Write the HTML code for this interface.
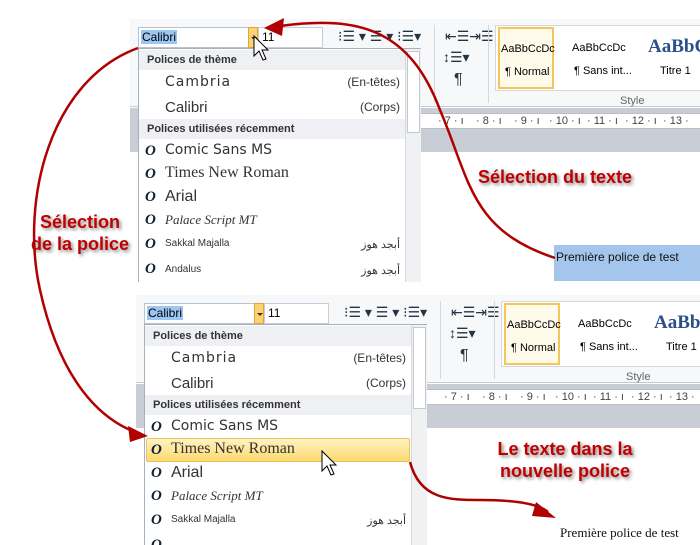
<!DOCTYPE html>
<html><head><meta charset="utf-8"><style>
*{margin:0;padding:0;box-sizing:border-box}
html,body{width:700px;height:545px;overflow:hidden}
body{background:#fff;position:relative;font-family:"Liberation Sans","Noto Sans CJK SC",sans-serif}
.p{position:absolute;overflow:hidden}
.p div,.p span{position:absolute;white-space:nowrap}
.rib{left:-20px;top:-8px;width:700px;height:88px;background:#f7f8fa;border-bottom:1px solid #c6cbd3}
.band{left:-20px;top:81px;width:700px;height:44px;background:#c9ced6}
.ruler{left:262px;top:86px;width:400px;height:16px;background:#fff;border-top:1px solid #b8bec8;border-bottom:1px solid #b8bec8;font-size:11px;color:#444;line-height:14px}
.fb{left:0;top:0;width:112px;height:21px;background:#fff;border:1px solid #b9c2cf;font-size:12px;line-height:19px;padding-left:2px}
.sel{position:static!important;background:#9cc6f3;padding:0 1px}
.dd{left:110px;top:0;width:10px;height:21px;background:#fcd36f;border:1px solid #e1a33b}
.dd:after{content:"";position:absolute;left:2px;top:9px;border:3px solid transparent;border-top:3px solid #333}
.sz{left:120px;top:0;width:65px;height:21px;background:#fff;border:1px solid #c8ced8;font-size:12px;line-height:19px;padding-left:3px}
.ic{font-size:14px;color:#234}
.gal{left:357px;top:-2px;width:220px;height:66px;background:#fff;border:1px solid #d3d8e0}
.st{top:0;width:72px;height:62px;font-size:11px;text-align:center}
.menu{left:0;top:21px;width:283px;height:300px;background:#fff;border:1px solid #a7b0bd}
.hd{left:0;width:266px;height:20px;background:#eef0f4;font-size:11px;font-weight:bold;color:#333;line-height:20px;padding-left:8px}
.it{left:26px;font-size:15px;color:#333}
.rt{right:20px;font-size:12px;color:#333}
.o{left:6px;font:italic bold 15px "Liberation Serif",serif;color:#123}
.sb{left:266px;top:0;width:16px;height:300px;background:#f0f1f3;border-left:1px solid #d5d9df}
.red{color:#c00000;font-weight:bold;font-size:18px;text-shadow:2px 2px 3px #888}
.n{top:0}
</style></head><body>

<div class="p" style="left:130px;top:0;width:570px;height:282px">
<div style="left:8px;top:27px;width:570px;height:300px">
 <div class="rib"></div>
 <div class="band"></div>
 <div class="ruler"><span class="n" style="left:38px">· 7 ·  ı</span><span class="n" style="left:76px">· 8 ·  ı</span><span class="n" style="left:114px">· 9 ·  ı</span><span class="n" style="left:149px">· 10 ·  ı</span><span class="n" style="left:187px">· 11 ·  ı</span><span class="n" style="left:225px">· 12 ·  ı</span><span class="n" style="left:263px">· 13 ·</span></div>
 <div style="left:-20px;top:125px;width:700px;height:200px;background:#fff"></div>
 <div class="fb"><span class="sel">Calibri</span></div><div class="dd"></div>
 <div class="sz">11</div>
 <div class="ic" style="left:200px;top:1px">⁝☰ ▾ ☰ ▾ ⁝☰▾</div>
 <div class="ic" style="left:307px;top:1px">⇤☰⇥☰</div>
 <div class="ic" style="left:305px;top:22px">↕☰▾</div>
 <div style="left:316px;top:44px;font-size:16px;color:#333">¶</div>
 <div style="left:296px;top:-2px;width:1px;height:78px;background:#d5d9df"></div>
 <div style="left:350px;top:-2px;width:1px;height:78px;background:#d5d9df"></div>
 <div class="gal">
  <div class="st" style="left:2px;top:1px;width:56px;border:2px solid #f3c55a;background:#fffbea"><span style="left:1px;top:14px">AaBbCcDc</span><span style="left:5px;top:37px">¶ Normal</span></div>
  <div class="st" style="left:74px"><span style="left:2px;top:16px">AaBbCcDc</span><span style="left:4px;top:39px">¶ Sans int...</span></div>
  <div class="st" style="left:150px"><span style="left:2px;top:10px;font:bold 19px 'Liberation Serif',serif;color:#2a4f8a">AaBbC</span><span style="left:14px;top:39px">Titre 1</span></div>
 </div>
 <div style="left:482px;top:68px;font-size:11px;color:#666">Style</div>
 <div class="menu">
  <div class="hd" style="top:1px">Polices de thème</div>
  <div class="it" style="top:25px;font-family:'DejaVu Sans';font-size:14px;letter-spacing:1px">Cambria</div><div class="rt" style="top:26px">(En-têtes)</div>
  <div class="it" style="top:50px">Calibri</div><div class="rt" style="top:51px">(Corps)</div>
  <div class="hd" style="top:70px">Polices utilisées récemment</div>
  <div class="o" style="top:94px">O</div><div class="it" style="top:93px;font-family:'DejaVu Sans';font-size:14px">Comic Sans MS</div>
  <div class="o" style="top:117px">O</div><div class="it" style="top:115px;font:16px 'Liberation Serif',serif">Times New Roman</div>
  <div class="o" style="top:140px">O</div><div class="it" style="top:139px;font-size:16px">Arial</div>
  <div class="o" style="top:163px">O</div><div class="it" style="top:163px;font:italic 13px 'Liberation Serif',serif">Palace Script MT</div>
  <div class="o" style="top:187px">O</div><div class="it" style="top:189px;font-size:10px">Sakkal Majalla</div><div class="rt" style="top:189px;font-size:11px">أبجد هوز</div>
  <div class="o" style="top:212px">O</div><div class="it" style="top:215px;font-size:10px">Andalus</div><div class="rt" style="top:215px;font-size:11px">أبجد هوز</div>
  <div class="sb"><div style="left:1px;top:2px;width:13px;height:82px;background:#fff;border:1px solid #c3c8d0"></div></div>
 </div>
</div>
</div>

<div class="p" style="left:136px;top:276px;width:564px;height:269px">
<div style="left:8px;top:27px;width:570px;height:300px">
 <div class="rib"></div>
 <div class="band"></div>
 <div class="ruler"><span class="n" style="left:38px">· 7 ·  ı</span><span class="n" style="left:76px">· 8 ·  ı</span><span class="n" style="left:114px">· 9 ·  ı</span><span class="n" style="left:149px">· 10 ·  ı</span><span class="n" style="left:187px">· 11 ·  ı</span><span class="n" style="left:225px">· 12 ·  ı</span><span class="n" style="left:263px">· 13 ·</span></div>
 <div style="left:-20px;top:125px;width:700px;height:200px;background:#fff"></div>
 <div class="fb"><span class="sel">Calibri</span></div><div class="dd"></div>
 <div class="sz">11</div>
 <div class="ic" style="left:200px;top:1px">⁝☰ ▾ ☰ ▾ ⁝☰▾</div>
 <div class="ic" style="left:307px;top:1px">⇤☰⇥☰</div>
 <div class="ic" style="left:305px;top:22px">↕☰▾</div>
 <div style="left:316px;top:44px;font-size:16px;color:#333">¶</div>
 <div style="left:296px;top:-2px;width:1px;height:78px;background:#d5d9df"></div>
 <div style="left:350px;top:-2px;width:1px;height:78px;background:#d5d9df"></div>
 <div class="gal">
  <div class="st" style="left:2px;top:1px;width:56px;border:2px solid #f3c55a;background:#fffbea"><span style="left:1px;top:14px">AaBbCcDc</span><span style="left:5px;top:37px">¶ Normal</span></div>
  <div class="st" style="left:74px"><span style="left:2px;top:16px">AaBbCcDc</span><span style="left:4px;top:39px">¶ Sans int...</span></div>
  <div class="st" style="left:150px"><span style="left:2px;top:10px;font:bold 19px 'Liberation Serif',serif;color:#2a4f8a">AaBbC</span><span style="left:14px;top:39px">Titre 1</span></div>
 </div>
 <div style="left:482px;top:68px;font-size:11px;color:#666">Style</div>
 <div class="menu">
  <div class="hd" style="top:1px">Polices de thème</div>
  <div class="it" style="top:25px;font-family:'DejaVu Sans';font-size:14px;letter-spacing:1px">Cambria</div><div class="rt" style="top:26px">(En-têtes)</div>
  <div class="it" style="top:50px">Calibri</div><div class="rt" style="top:51px">(Corps)</div>
  <div class="hd" style="top:70px">Polices utilisées récemment</div>
  <div class="o" style="top:94px">O</div><div class="it" style="top:93px;font-family:'DejaVu Sans';font-size:14px">Comic Sans MS</div>
  <div style="left:1px;top:113px;width:264px;height:24px;background:linear-gradient(#fff3c4,#fcd96e);border:1px solid #e8c25a;border-radius:2px"></div>
  <div class="o" style="top:117px">O</div><div class="it" style="top:115px;font:16px 'Liberation Serif',serif">Times New Roman</div>
  <div class="o" style="top:140px">O</div><div class="it" style="top:139px;font-size:16px">Arial</div>
  <div class="o" style="top:163px">O</div><div class="it" style="top:163px;font:italic 13px 'Liberation Serif',serif">Palace Script MT</div>
  <div class="o" style="top:187px">O</div><div class="it" style="top:189px;font-size:10px">Sakkal Majalla</div><div class="rt" style="top:189px;font-size:11px">أبجد هوز</div>
  <div class="o" style="top:212px">O</div>
  <div class="sb"><div style="left:1px;top:2px;width:13px;height:82px;background:#fff;border:1px solid #c3c8d0"></div></div>
 </div>
</div>
</div>

<div style="position:absolute;left:554px;top:245px;width:146px;height:36px;background:#a4c6ec"></div>
<div style="position:absolute;left:556px;top:250px;font-size:12px;color:#111">Première police de test</div>
<div style="position:absolute;left:560px;top:525px;font:13px 'Liberation Serif',serif;color:#111">Première police de test</div>

<div class="red" style="position:absolute;left:478px;top:167px">Sélection du texte</div>
<div class="red" style="position:absolute;left:25px;top:211px;text-align:center;width:110px;line-height:22px">Sélection<br>de la police</div>
<div class="red" style="position:absolute;left:485px;top:438px;text-align:center;width:160px;line-height:22px">Le texte dans la<br>nouvelle police</div>

<svg style="position:absolute;left:0;top:0" width="700" height="545">
 <g fill="none" stroke="#b00000" stroke-width="2.5">
  <path d="M555 258 C470 230 470 180 440 110 C410 30 360 15 280 26"/>
  <path d="M138 48 C50 80 20 200 40 290 C60 380 100 420 138 433"/>
  <path d="M410 462 C420 500 450 500 480 500 C520 500 540 505 548 512"/>
 </g>
 <g fill="#b00000">
  <polygon points="264,28 284,18 282,36"/>
  <polygon points="148,436 128,426 130,442"/>
  <polygon points="556,518 536,502 532,516"/>
 </g>
 <g fill="#fff" stroke="#000" stroke-width="1">
  <path d="M254 36 L254 56 L259 51 L263 60 L266 59 L262 50 L268 50 Z"/>
  <path d="M322 451 L322 471 L327 466 L331 475 L334 474 L330 465 L336 465 Z"/>
 </g>
</svg>
</body></html>
